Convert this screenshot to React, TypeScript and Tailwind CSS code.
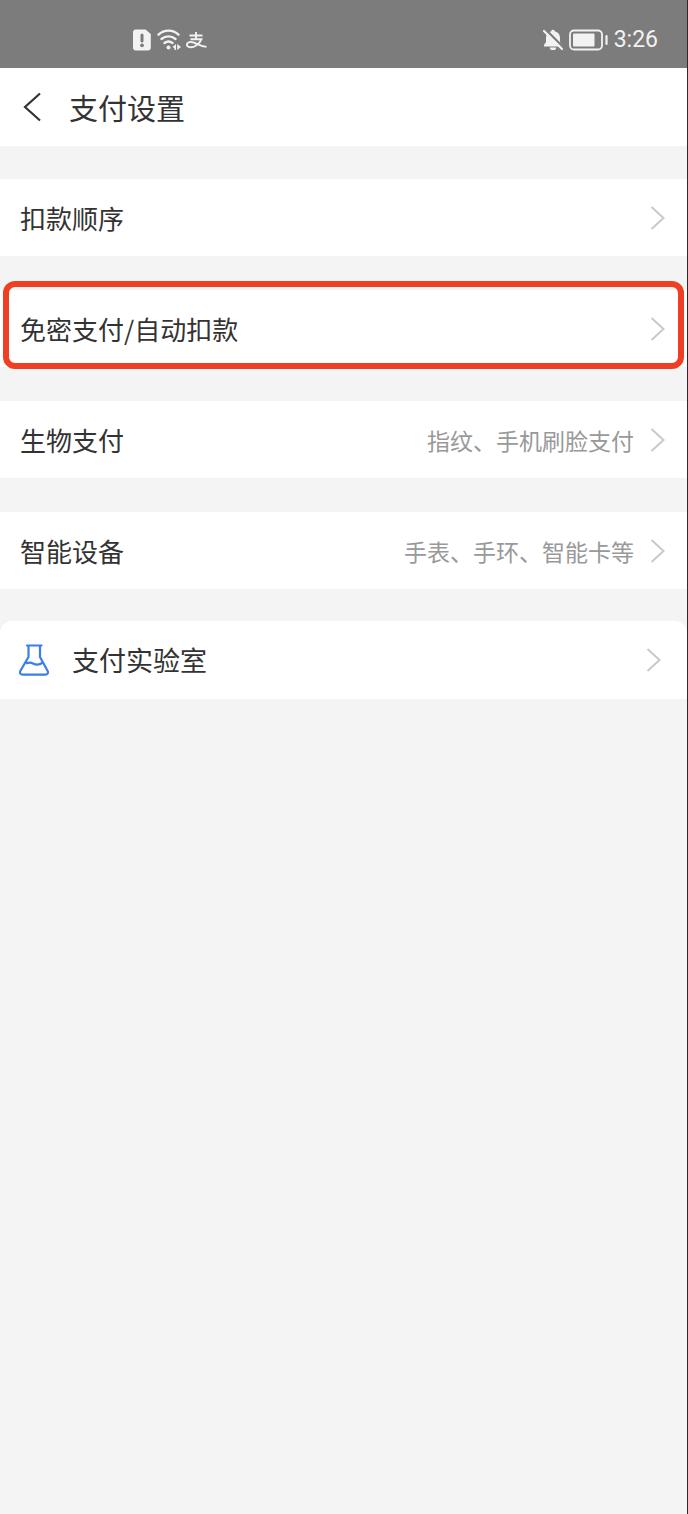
import type { ReactNode } from 'react';

const settings = [
  { label: '扣款顺序' },
  { label: '免密支付/自动扣款', highlighted: true },
  { label: '生物支付', detail: '指纹、手机刷脸支付' },
  { label: '智能设备', detail: '手表、手环、智能卡等' },
];

function ChevronRight() {
  return (
    <svg className="h-6 w-4 shrink-0" viewBox="0 0 16 24" fill="none" stroke="#c9c9c9" strokeWidth="2" aria-hidden="true">
      <path d="M1.5 1 L13.5 12 L1.5 23" />
    </svg>
  );
}

function StatusBar() {
  return (
    <div className="flex h-17 items-center justify-between bg-[#7c7c7c] pt-3 pr-[29px] pl-[133px] text-[#f2f2f2]">
      <div className="flex items-center gap-1">
        <svg className="h-[22px] w-[18px]" viewBox="0 0 18 22" aria-hidden="true">
          <path fill="currentColor" d="M3 0.5h9.5L17.8 5v13.5a3 3 0 0 1-3 3H3a3 3 0 0 1-3-3v-15a3 3 0 0 1 3-3z" />
          <path stroke="#7c7c7c" strokeWidth="3" strokeLinecap="round" d="M9 6v6" />
          <circle cx="9" cy="16.3" r="1.9" fill="#7c7c7c" />
        </svg>
        <svg className="h-[22px] w-[27px]" viewBox="0 0 27 22" fill="none" stroke="currentColor" aria-hidden="true">
          <g strokeWidth="2.4" strokeLinecap="round">
            <path d="M3.500 5.600a14.500 14.500 0 0 1 20 0" />
            <path d="M6.500 10a10.800 10.800 0 0 1 14 0" />
            <path d="M9.500 14a6.800 6.800 0 0 1 8 0" />
          </g>
          <circle cx="13.5" cy="18.500" r="2" fill="currentColor" stroke="none" />
          <path fill="currentColor" stroke="none" d="M21 15v6h-1.500v-1.800L17.500 18zM22.200 15v6l3.800-3z" />
        </svg>
        <svg className="h-[22px] w-[22px]" viewBox="0 0 22 22" fill="none" stroke="currentColor" strokeWidth="1.9" aria-hidden="true">
          <path d="M3.500 6.500h13M10 3v7M4.500 10.200h11c-1 2.600-2.700 4.500-5 6-2.500 1.700-6.300 2.500-8.300 1.500-1.800-.9-1.700-3.300.2-4.200 2.300-1.100 5.600-.1 8.600 1.400 3.200 1.600 6 2.600 9.500 3" />
        </svg>
      </div>
      <div className="flex items-center">
        <svg className="h-[22px] w-[22px]" viewBox="0 0 22 22" aria-hidden="true">
          <path
            fill="currentColor"
            d="M11 .8a1.800 1.800 0 0 1 1.800 1.400C16 3 18 5.500 18 8.500v4.500l2 3v1.400H2V16l2-3V8.500c0-3 2-5.500 5.200-6.300A1.800 1.800 0 0 1 11 .8z"
          />
          <path fill="currentColor" d="M7.800 18.400h6.400a3.200 2.600 0 0 1-6.400 0z" />
          <path stroke="#7c7c7c" strokeWidth="2.200" d="M2.500-.6l19.500 19.500" />
          <path stroke="currentColor" strokeWidth="2.200" strokeLinecap="round" d="M2 2l18 18" />
        </svg>
        <svg className="ml-[5px] h-[22px] w-[39px]" viewBox="0 0 39 22" fill="none" aria-hidden="true">
          <rect x="1" y="1.500" width="32" height="19" rx="4" stroke="currentColor" strokeWidth="1.800" />
          <rect x="4" y="4.500" width="21.500" height="13" rx="1" fill="currentColor" />
          <path stroke="currentColor" strokeWidth="2.200" strokeLinecap="round" d="M37.500 7v8" />
        </svg>
        <span className="ml-[6px] font-[Roboto,sans-serif] text-[23px] leading-6">3:26</span>
      </div>
    </div>
  );
}

function Row({ detail, highlighted, children }: { detail?: string; highlighted?: boolean; children: ReactNode }) {
  return (
    <li className="relative">
      <button className="flex h-[77px] w-full items-center bg-white pr-[21px] pl-5 text-left">
        <span className="flex-1 text-[26px] leading-8">{children}</span>
        {detail && <span className="text-[23px] leading-8 text-[#999]">{detail}</span>}
        <span className="ml-4">
          <ChevronRight />
        </span>
      </button>
      {highlighted && (
        <div className="pointer-events-none absolute inset-x-[3px] -top-[9px] -bottom-[2px] rounded-xl border-6 border-[#ee3f24]" />
      )}
    </li>
  );
}

export default function App() {
  return (
    <div className="min-h-screen border-r border-[#2b2b2b] bg-[#f4f4f4] font-['Noto_Sans_CJK_SC',sans-serif] text-[#333]">
      <StatusBar />

      <header className="flex h-[78px] items-center bg-white pl-[22px]">
        <button aria-label="返回" className="mr-[27px]">
          <svg className="h-[30px] w-5" viewBox="0 0 20 30" fill="none" stroke="#333" strokeWidth="2.200" aria-hidden="true">
            <path d="M18 1.500L3 15l15 13.500" />
          </svg>
        </button>
        <h1 className="text-[29px] leading-9">支付设置</h1>
      </header>

      <main className="mt-[33px]">
        <ul className="flex flex-col gap-[34px]">
          {settings.map((item) => (
            <Row key={item.label} detail={item.detail} highlighted={item.highlighted}>
              {item.label}
            </Row>
          ))}
        </ul>

        <button className="mt-8 flex h-[78px] w-full items-center rounded-t-xl bg-white pr-[25px] pl-[19px] text-left">
          <svg className="h-8 w-[30px]" viewBox="0 0 30 32" fill="none" stroke="#3a7fe8" strokeWidth="2.200" aria-hidden="true">
            <path strokeLinecap="round" d="M8 1.500h14.500" />
            <path
              strokeLinejoin="round"
              d="M9.500 1.500v11.500L1.600 26.500c-1.300 2.300-.3 4.200 2.200 4.200h22.400c2.500 0 3.500-1.900 2.200-4.200L21 13V1.500"
            />
            <path d="M7 19.500c3-1.700 5-1.200 7.500.2s5 2 9.300-1.200" />
          </svg>
          <span className="ml-[23px] flex-1 text-[27px] leading-8">支付实验室</span>
          <ChevronRight />
        </button>
      </main>
    </div>
  );
}
